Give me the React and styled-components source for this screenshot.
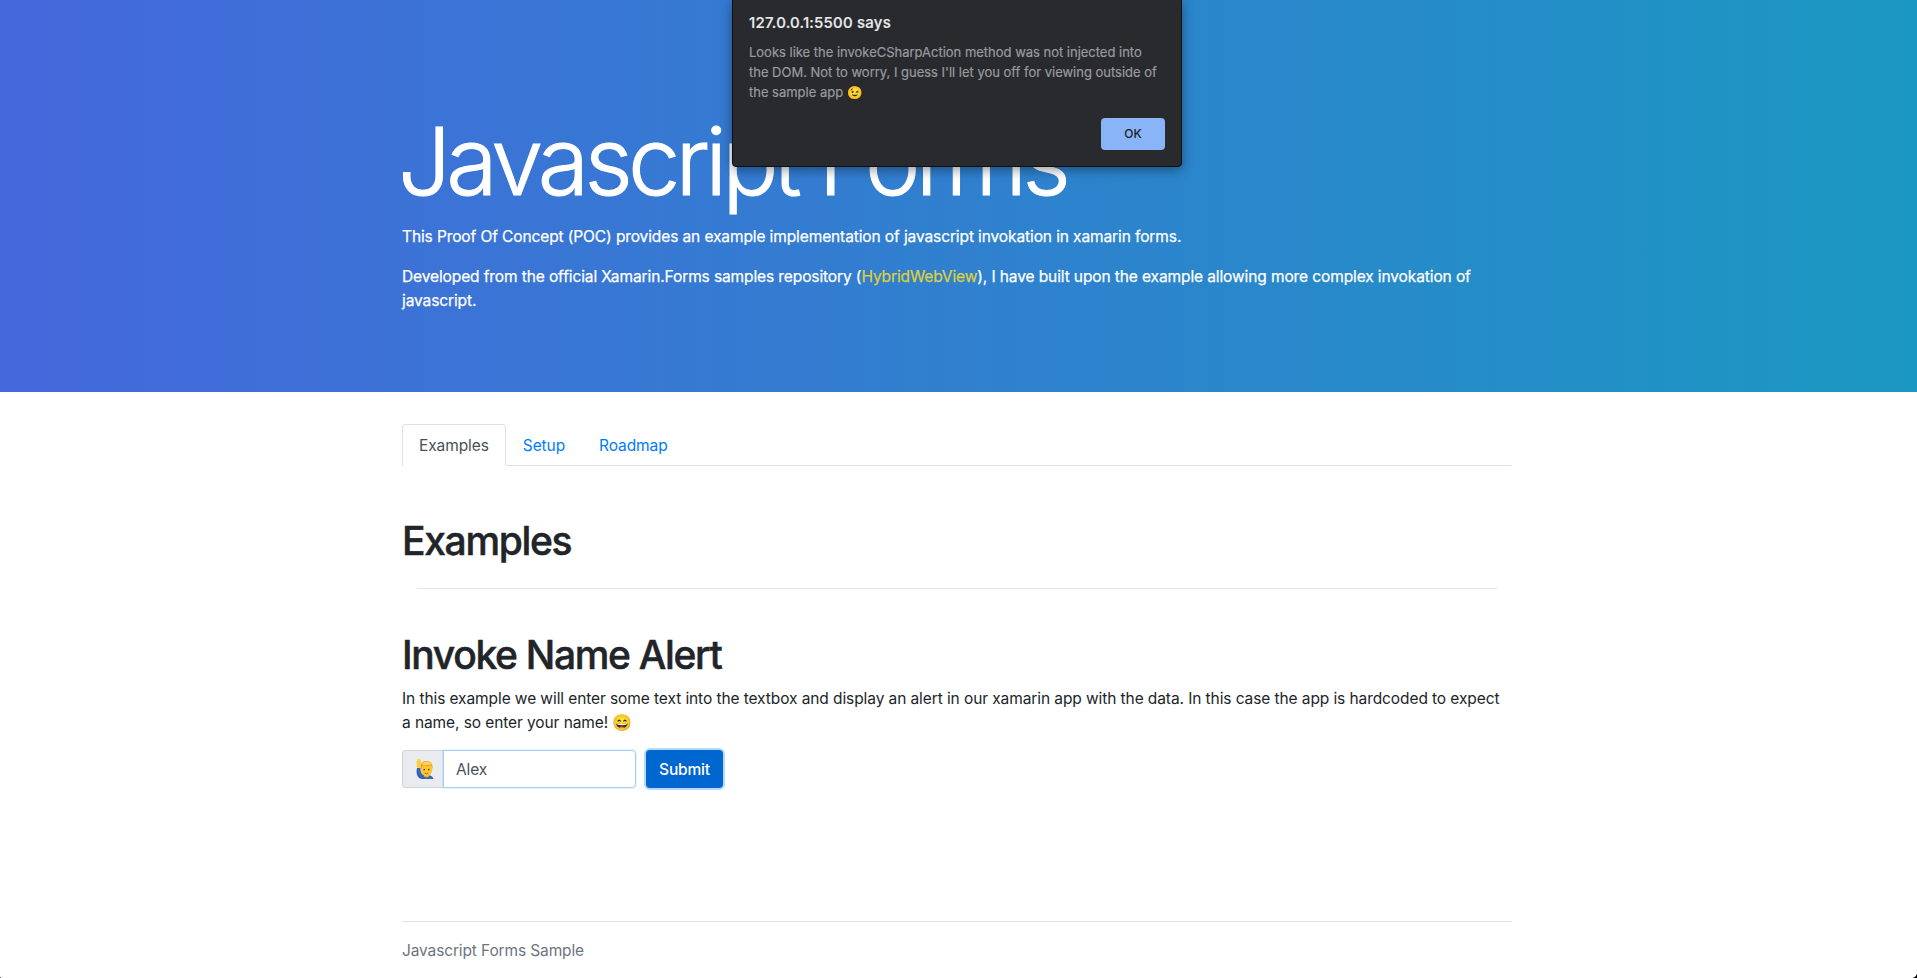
import React from "react";
import styled, { createGlobalStyle } from "styled-components";

const GlobalStyle = createGlobalStyle`
  *, *::before, *::after { box-sizing: border-box; }
  body {
    margin: 0;
    background: #fff;
    color: #212529;
    font: 400 15.5px/24px Inter, "Liberation Sans", sans-serif;
    letter-spacing: -0.09px;
    overflow: hidden;
  }
  h1, h2, p { margin: 0; }
`;

const Page = styled.div`
  position: relative;
  height: 978px;
  overflow: hidden;
`;

const Container = styled.div`
  width: 1110px;
  margin-left: 402px;
`;

const Hero = styled.header`
  height: 392px;
  padding-top: 104px;
  color: #fff;
  letter-spacing: -0.108px;
  -webkit-text-stroke: 0.25px currentColor;
  background: linear-gradient(to right, #4568dc, #1b98c2);
`;

const HeroTitle = styled.h1`
  margin: 0 0 6px -4px;
  font-size: 93.5px;
  font-weight: 300;
  line-height: 115px;
  letter-spacing: -4.75px;
  -webkit-text-stroke: 1px currentColor;
  white-space: nowrap;
`;

const Paragraph = styled.p`
  margin-bottom: 16px;
`;

const HeroLink = styled.a`
  color: #dcd03c;
`;

const Tabs = styled.nav`
  display: flex;
  height: 42px;
  margin-top: 32px;
  border-bottom: 1px solid #dee2e6;
`;

const Tab = styled.a`
  height: 42px;
  padding: 9px 16px 7px;
  border: 1px solid transparent;
  border-color: ${(p) => (p.$active ? "#dee2e6 #dee2e6 #fff" : "transparent")};
  border-radius: 4px 4px 0 0;
  background: ${(p) => (p.$active ? "#fff" : "transparent")};
  color: ${(p) => (p.$active ? "#495057" : "#007bff")};
`;

const Heading = styled.h2`
  margin-top: ${(p) => p.$top}px;
  margin-bottom: 8px;
  font-size: 39px;
  font-weight: 500;
  line-height: 48px;
  letter-spacing: -1.32px;
  -webkit-text-stroke: 0.5px currentColor;
`;

const Rule = styled.hr`
  height: 1px;
  margin: ${(p) => p.$top}px ${(p) => p.$inset || 0}px 0;
  border: 0;
  background: #e3e4e5;
`;

const FormRow = styled.form`
  display: flex;
  gap: 10px;
  height: 38px;
  margin-top: -1px;
`;

const InputGroup = styled.div`
  display: flex;
  width: 234px;
`;

const Prepend = styled.span`
  display: flex;
  align-items: center;
  width: 41px;
  padding-left: 12px;
  border: 1px solid #ced4da;
  border-right: 0;
  border-radius: 4px 0 0 4px;
  background: #e9ecef;
`;

const NameInput = styled.input`
  flex: 1;
  min-width: 0;
  padding: 7px 12px 5px;
  border: 1px solid #a3cdf3;
  border-radius: 0 4px 4px 0;
  outline: 0;
  box-shadow: 0 0 0 1px rgba(0, 123, 255, 0.1);
  background: #fff;
  color: #495057;
  font: inherit;
  letter-spacing: inherit;
`;

const SubmitButton = styled.button`
  width: 77px;
  padding: 1px 0 0;
  border: 0;
  border-radius: 4px;
  background: #0066d0;
  box-shadow: 0 0 0 2px #b3dafd;
  color: #fff;
  font: inherit;
  font-weight: 500;
  letter-spacing: -0.15px;
`;

const FooterText = styled.p`
  margin-top: 17px;
  color: #6c757d;
  letter-spacing: -0.13px;
`;

const Emoji = styled.span`
  font-size: ${(p) => p.$size}px;
  line-height: 1;
  letter-spacing: 0;
`;

const Dialog = styled.div`
  position: absolute;
  top: -1px;
  left: 732px;
  width: 450px;
  height: 168px;
  padding: 13px 16px 0;
  border: 1px solid #0e0f13;
  border-radius: 0 0 4px 4px;
  background: #292a2d;
  box-shadow: 0 3px 12px rgba(0, 0, 0, 0.4);
`;

const DialogTitle = styled.h2`
  color: #e8eaed;
  font-size: 15px;
  font-weight: 500;
  line-height: 20px;
  letter-spacing: 0.21px;
  -webkit-text-stroke: 0.2px currentColor;
`;

const DialogMessage = styled.p`
  margin-top: 9px;
  color: #979ba0;
  font-size: 13px;
  line-height: 20px;
  letter-spacing: -0.015px;
  -webkit-text-stroke: 0.2px currentColor;
  white-space: nowrap;
`;

const DialogActions = styled.div`
  display: flex;
  justify-content: flex-end;
  margin-top: 16px;
`;

const OkButton = styled.button`
  width: 64px;
  height: 32px;
  padding: 0 0 1px;
  border: 0;
  border-radius: 4px;
  background: #8ab4f8;
  color: #202124;
  font: 500 12px Inter, sans-serif;
`;

const WindowCorner = styled.i`
  position: absolute;
  bottom: 0;
  right: ${(p) => (p.$right ? 0 : "auto")};
  left: ${(p) => (p.$right ? "auto" : 0)};
  width: ${(p) => (p.$right ? 5 : 1)}px;
  height: ${(p) => (p.$right ? 5 : 1)}px;
  background: ${(p) =>
    p.$right ? "radial-gradient(circle at 0 0, transparent 4.5px, #000 5.2px)" : "#666"};
`;

function RaisedHandIcon() {
  return (
    <svg width="19" height="22" viewBox="0 0 19 22" aria-hidden="true">
      <path d="M2 10C.8 15 2 20 6.5 21H18.500C18 18.500 16 17.500 13.500 17L8 16.500C6 15.500 5.500 13 5.500 10Z" fill="#3765b5" />
      <path d="M2 9.800 1.500 3.500 2.200 3 2.800 1 3.700.6 4.500 1 5.300 1.500 6.300 4 5.700 6.500 5.200 10Z" fill="#ffcf3b" />
      <path d="M9 16h5v2.500c-1.500 1.200-3.500 1.200-5 0Z" fill="#e7a51c" />
      <ellipse cx="11.500" cy="11.500" rx="5.700" ry="6.800" fill="#fdc52c" />
      <path d="M5.700 11C5 6 7 3 11.500 3s6.700 3 5.900 8c-.6-1-.8-2.200-1-3.200-3 .3-6 .2-8.200-.6C7 8.500 6.700 10 5.700 11Z" fill="#e9a21f" />
      <path d="M7 6.300C8 4 10 3.500 13 3.800c2 .3 3 1.400 3.400 2.700C13 7.300 9 7 7 6.300Z" fill="#ffd65a" />
      <circle cx="9.300" cy="11.500" r=".85" fill="#55401c" />
      <circle cx="13.700" cy="11.500" r=".85" fill="#55401c" />
      <path d="M9.700 15.200q1.800.9 3.600 0" fill="none" stroke="#9c5a1a" strokeWidth=".9" />
    </svg>
  );
}

export default function App() {
  return (
    <Page>
      <GlobalStyle />
      <Hero>
        <Container>
          <HeroTitle>Javascript Forms</HeroTitle>
          <Paragraph>
            This Proof Of Concept (POC) provides an example implementation of javascript invokation in
            xamarin forms.
          </Paragraph>
          <Paragraph>
            Developed from the official Xamarin.Forms samples repository (
            <HeroLink>HybridWebView</HeroLink>), I have built upon the example allowing more complex
            invokation of
            <br />
            javascript.
          </Paragraph>
        </Container>
      </Hero>
      <Container>
        <Tabs>
          <Tab $active>Examples</Tab>
          <Tab>Setup</Tab>
          <Tab>Roadmap</Tab>
        </Tabs>
        <Heading $top={51}>Examples</Heading>
        <Rule $top={23} $inset={15} />
        <Heading $top={42}>Invoke Name Alert</Heading>
        <Paragraph>
          In this example we will enter some text into the textbox and display an alert in our xamarin
          app with the data. In this case the app is hardcoded to expect
          <br />a name, so enter your name! <Emoji $size={16}>😄</Emoji>
        </Paragraph>
        <FormRow>
          <InputGroup>
            <Prepend>
              <RaisedHandIcon />
            </Prepend>
            <NameInput defaultValue="Alex" />
          </InputGroup>
          <SubmitButton type="button">Submit</SubmitButton>
        </FormRow>
        <Rule $top={133} />
        <FooterText>Javascript Forms Sample</FooterText>
      </Container>
      <Dialog>
        <DialogTitle>127.0.0.1:5500 says</DialogTitle>
        <DialogMessage>
          Looks like the invokeCSharpAction method was not injected into
          <br />
          the DOM. Not to worry, I guess I'll let you off for viewing outside of
          <br />
          the sample app <Emoji $size={12.5}>😉</Emoji>
        </DialogMessage>
        <DialogActions>
          <OkButton type="button">OK</OkButton>
        </DialogActions>
      </Dialog>
      <WindowCorner />
      <WindowCorner $right />
    </Page>
  );
}
